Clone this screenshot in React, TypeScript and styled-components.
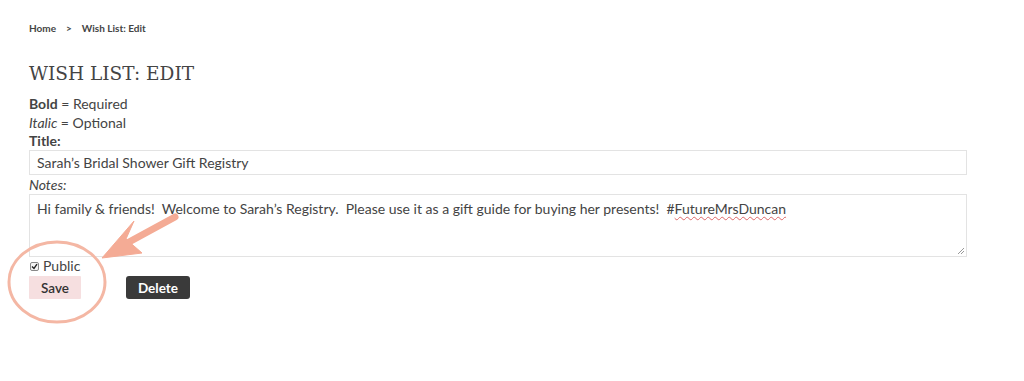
import React from "react";
import styled, { createGlobalStyle } from "styled-components";

const Global = createGlobalStyle`
  html, body { margin: 0; padding: 0; background: #fff; }
  body { font-family: Lato, "Open Sans", sans-serif; color: #444; }
  * { box-sizing: border-box; }
`;

const Page = styled.div`
  position: relative;
  width: 1024px;
  height: 381px;
  padding: 21px 57px 0 29px;
  overflow: hidden;
`;

const Breadcrumb = styled.nav`
  display: flex;
  gap: 10px;
  font-size: 10px;
  font-weight: 700;
  color: #444;
  line-height: 14px;
`;

const Heading = styled.h1`
  margin: 28px 0 0 0;
  font-family: "DejaVu Serif", serif;
  font-weight: 400;
  font-size: 18.5px;
  line-height: 22px;
  color: #444;
`;

const Legend = styled.div`
  margin-top: 9px;
  font-size: 14px;
  line-height: 19px;
`;

const Label = styled.div<{ $italic?: boolean }>`
  font-size: 14px;
  line-height: 18px;
  font-weight: ${(p) => (p.$italic ? 400 : 700)};
  font-style: ${(p) => (p.$italic ? "italic" : "normal")};
`;

const TextInput = styled.div`
  width: 938px;
  height: 25px;
  border: 1px solid #e3e3e3;
  padding: 0 7px;
  font-size: 14px;
  line-height: 23px;
  color: #444;
  margin-bottom: 1px;
`;

const TextArea = styled.div`
  position: relative;
  width: 938px;
  height: 63px;
  border: 1px solid #e3e3e3;
  padding: 5px 7px;
  font-size: 14px;
  line-height: 17px;
  color: #444;
`;

const Spell = styled.span`
  text-decoration: underline wavy #d66;
  text-decoration-thickness: 1px;
  text-underline-offset: 2px;
`;

const Grip = styled.svg`
  position: absolute;
  right: 1px;
  bottom: 1px;
`;

const CheckRow = styled.label`
  display: flex;
  align-items: center;
  gap: 4px;
  margin-top: 1px;
  font-size: 14px;
  line-height: 16px;
`;

const Box = styled.span`
  width: 9px;
  height: 9px;
  border: 1px solid #888;
  border-radius: 2px;
  background: #f4f4f4;
  display: inline-flex;
  align-items: center;
  justify-content: center;
  margin-left: 1px;
`;

const Buttons = styled.div`
  display: flex;
  gap: 45px;
  margin-top: 2px;
`;

const Button = styled.button<{ $dark?: boolean }>`
  height: 23px;
  padding: 0 12px;
  border: none;
  border-radius: ${(p) => (p.$dark ? "3px" : "1px")};
  background: ${(p) => (p.$dark ? "#3a3a3a" : "#f6dfe0")};
  color: ${(p) => (p.$dark ? "#fff" : "#333")};
  font-family: Lato, sans-serif;
  font-size: 13.5px;
  font-weight: ${(p) => (p.$dark ? 700 : 600)};
  cursor: pointer;
`;

const Overlay = styled.svg`
  position: absolute;
  left: 0;
  top: 0;
  pointer-events: none;
`;

export default function App() {
  return (
    <>
      <Global />
      <Page>
        <Breadcrumb>
          <span>Home</span>
          <span>&gt;</span>
          <span>Wish List: Edit</span>
        </Breadcrumb>
        <Heading>WISH LIST: EDIT</Heading>
        <Legend>
          <div>
            <b>Bold</b> = Required
          </div>
          <div>
            <i>Italic</i> = Optional
          </div>
        </Legend>
        <Label>Title:</Label>
        <TextInput>Sarah’s Bridal Shower Gift Registry</TextInput>
        <Label $italic>Notes:</Label>
        <TextArea>
          Hi family &amp; friends!&nbsp; Welcome to Sarah’s Registry.&nbsp; Please use it as a gift guide for
          buying her presents!&nbsp; #<Spell>FutureMrsDuncan</Spell>
          <Grip width="9" height="9" viewBox="0 0 9 9">
            <path d="M8 2 L2 8 M8 5 L5 8" stroke="#999" strokeWidth="1" />
          </Grip>
        </TextArea>
        <CheckRow>
          <Box>
            <svg width="7" height="7" viewBox="0 0 7 7">
              <path d="M1 3.5 L3 5.5 L6 1.2" stroke="#222" strokeWidth="1.4" fill="none" />
            </svg>
          </Box>
          Public
        </CheckRow>
        <Buttons>
          <Button>Save</Button>
          <Button $dark>Delete</Button>
        </Buttons>
        <Overlay width="1024" height="381" viewBox="0 0 1024 381">
          <ellipse cx="57" cy="282" rx="48" ry="40" fill="none" stroke="#f4b7a4" strokeWidth="3" />
          <path d="M175 217 L118 248" stroke="#f4ab95" strokeWidth="7" strokeLinecap="round" />
          <path d="M102 258 L134 221 L126 239 L142 253 Z" fill="#f4ab95" strokeLinejoin="round" stroke="#f4ab95" strokeWidth="1" />
        </Overlay>
      </Page>
    </>
  );
}
